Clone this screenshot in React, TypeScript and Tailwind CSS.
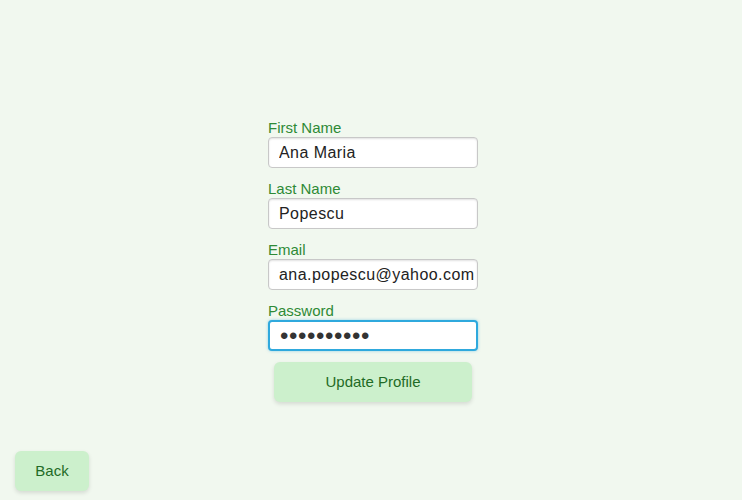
import React from 'react';

const fields = [
	{ label: 'First Name', value: 'Ana Maria', type: 'text' },
	{ label: 'Last Name', value: 'Popescu', type: 'text' },
	{ label: 'Email', value: 'ana.popescu@yahoo.com', type: 'email' },
	{ label: 'Password', value: 'parola1234', type: 'password' },
];

function App() {
	return (
		<div className="h-[500px] w-full bg-[#f1f8ef] flex flex-col justify-between font-['Liberation_Sans',Arial,sans-serif]">
			<div className="flex justify-center pl-[4px]">
				<div className="w-[210px] mt-[119px] flex flex-col">
					{fields.map((f, i) => (
						<div key={f.label} className="flex flex-col mb-[12px]">
							<label className="text-[15px] leading-[18px] text-[#2e8a36]">{f.label}</label>
							<input
								type={f.type}
								defaultValue={f.value}
								readOnly
								className={
									i === 3
										? 'h-[31px] w-full rounded-[4px] bg-white pl-[10px] pr-0 text-[24px] tracking-[0.6px] text-[#333] border-2 border-[#2fa9dd] shadow-[0_0_3px_rgba(47,169,221,0.5)] outline-none'
										: 'h-[31px] w-full rounded-[4px] bg-white pl-[10px] pr-0 text-[16px] tracking-[0.45px] text-[#222] border border-[#c8c8c8] shadow-[inset_0_1px_2px_rgba(0,0,0,0.12)] outline-none'
								}
							/>
						</div>
					))}
					<button className="mx-auto -mt-[1px] w-[198px] h-[40px] rounded-[6px] bg-[#ccf0cc] text-[15px] text-[#1f6b26] shadow-[0_2px_4px_rgba(0,0,0,0.12)]">
						Update Profile
					</button>
				</div>
			</div>
			<div className="pl-[15px] pb-[9px]">
				<button className="w-[74px] h-[40px] rounded-[6px] bg-[#ccf0cc] text-[15px] text-[#1f6b26] shadow-[0_2px_4px_rgba(0,0,0,0.12)]">
					Back
				</button>
			</div>
		</div>
	);
}

export default App;
